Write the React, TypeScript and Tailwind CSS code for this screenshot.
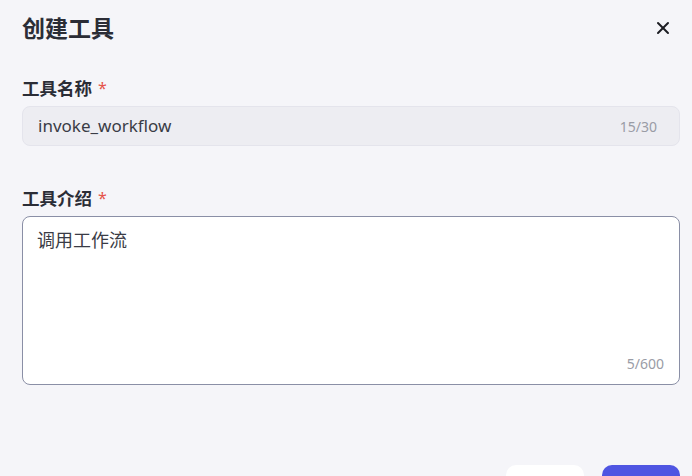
import { X } from 'lucide-react';

const font = { fontFamily: '"Noto Sans", "Noto Sans CJK SC", sans-serif' };

function Label({ text }: { text: string }) {
  return (
    <div className="flex items-center gap-[6px] text-[17.5px] font-bold leading-6 text-[#2b2d36]">
      <span>{text}</span>
      <span className="text-[16px] font-normal text-[#e5534b]">*</span>
    </div>
  );
}

export default function App() {
  return (
    <div className="h-[476px] w-[692px] overflow-hidden bg-[#f5f5f9]" style={font}>
      <div className="flex flex-col pl-[22px] pr-[12px]">
        <div className="flex h-[56px] items-center justify-between">
          <h1 className="text-[23px] font-bold text-[#2b2d36]">创建工具</h1>
          <button className="mr-[7px] text-[#1c1d23]">
            <X size={20} strokeWidth={2.4} />
          </button>
        </div>

        <div className="mt-[20px]">
          <Label text="工具名称" />
          <div className="mt-[6px] flex h-[40px] items-center justify-between rounded-[8px] border border-[#e4e4ec] bg-[#ededf2] pl-[15px] pr-[22px]">
            <span className="text-[17px] text-[#3a3c46]">invoke_workflow</span>
            <span className="text-[14px] text-[#9a9ca6]">15/30</span>
          </div>
        </div>

        <div className="mt-[40px]">
          <Label text="工具介绍" />
          <div className="mt-[6px] flex h-[169px] flex-col justify-between rounded-[8px] border border-[#8a8fa6] bg-white pb-[10px] pl-[14px] pt-[10px]">
            <span className="text-[18px] text-[#3a3c46]">调用工作流</span>
            <span className="self-end pr-[15px] text-[14px] text-[#9a9ca6]">5/600</span>
          </div>
        </div>

        <div className="mt-[80px] flex justify-end gap-[18px]">
          <button className="h-[36px] w-[78px] rounded-[10px] bg-white" />
          <button className="h-[36px] w-[78px] rounded-[10px] bg-[#4f55e2]" />
        </div>
      </div>
    </div>
  );
}
